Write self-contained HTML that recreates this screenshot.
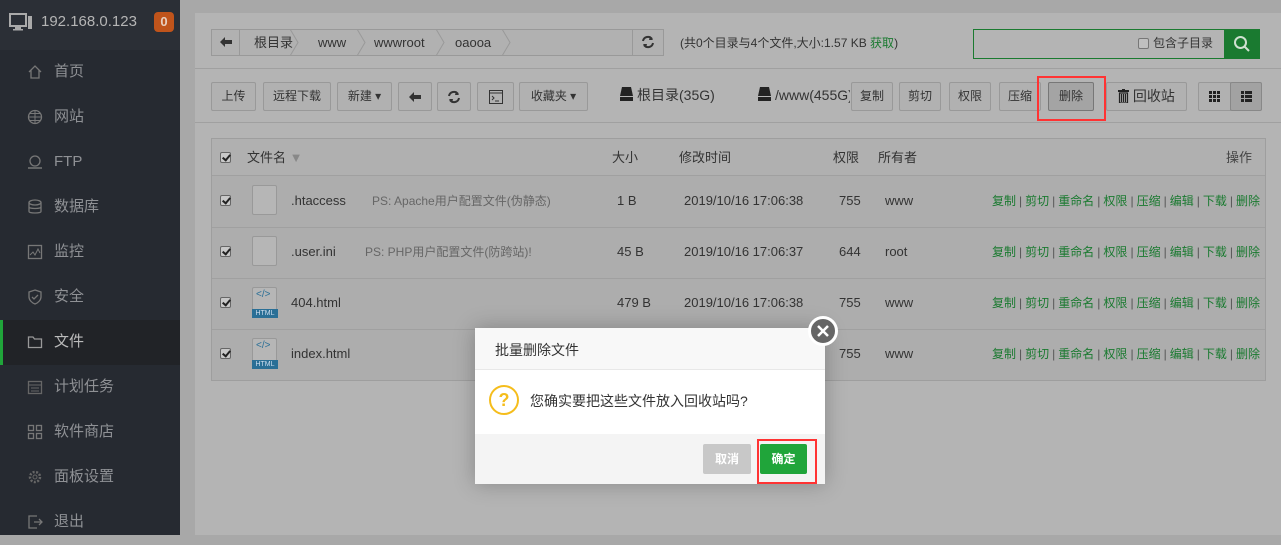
<!DOCTYPE html>
<html><head><meta charset="utf-8"><style>
*{box-sizing:border-box;margin:0;padding:0}
body{width:1281px;height:535px;overflow:hidden;background:#a8a8a8;font-family:"Liberation Sans","Noto Sans CJK SC",sans-serif;font-size:13px;line-height:18px;color:#333;position:relative}
.a{position:absolute}
#side{left:0;top:0;width:180px;height:535px;background:#262a31}
#side .hd{height:50px;background:#2b2f36}
.mi{position:absolute;left:0;width:180px;height:45px;color:#8f9195;font-size:15px}
.mi span{position:absolute;left:54px;top:12px;line-height:20px}
.mi svg{position:absolute;left:27px;top:14px}
#panel{left:195px;top:13px;width:1086px;height:522px;background:#b4b4b4}
.btn{position:absolute;height:29px;border:1px solid #999;border-radius:2px;background:#b1b1b1;color:#333;font-size:12px;text-align:center;line-height:27px}
.hl{position:absolute;height:1px;background:#a0a0a0}
.t{position:absolute;white-space:nowrap}
.cb{position:absolute;width:11px;height:11px;border:1px solid #666;border-radius:2px;background:#c8c8c8}
.cb:after{content:"";position:absolute;left:3px;top:0px;width:3px;height:6px;border:solid #222;border-width:0 2px 2px 0;transform:rotate(40deg)}
.ops{position:absolute;right:21px;font-size:12px;color:#1a7a30;white-space:nowrap}
.ops i{font-style:normal;color:#555;margin:0 3px}
.file{position:absolute;left:252px;width:25px;height:30px;border:1px solid #999;border-radius:2px;background:#b6b6b6}
</style></head><body>
<div id="side" class="a"><div class="hd"></div>
<svg class="a" style="left:9px;top:13px" width="24" height="18" viewBox="0 0 24 18"><rect x="1" y="1" width="16" height="12" fill="none" stroke="#aaa" stroke-width="2"/><rect x="6" y="14" width="6" height="2" fill="#aaa"/><rect x="4" y="16" width="10" height="1.5" fill="#aaa"/><rect x="19" y="3" width="4" height="13" fill="#aaa"/></svg>
<div class="t" style="left:41px;top:12px;color:#b5b5b5;font-size:15px;line-height:20px">192.168.0.123</div>
<div class="a" style="left:154px;top:12px;width:20px;height:20px;background:#c0541b;border-radius:4px;color:#e8d0c0;font-weight:bold;font-size:13px;text-align:center;line-height:20px">0</div>
<div class="mi" style="top:50px"><svg width="16" height="16"><path d="M2 8L8 2L14 8M4 6V14H12V6" fill="none" stroke="#777" stroke-width="1.3"/></svg><span>首页</span></div>
<div class="mi" style="top:95px"><svg width="16" height="16"><circle cx="8" cy="8" r="6.5" fill="none" stroke="#777" stroke-width="1.3"/><path d="M1.5 8H14.5M8 1.5V14.5M3 4.5H13M3 11.5H13" stroke="#777"/></svg><span>网站</span></div>
<div class="mi" style="top:140px"><svg width="16" height="16"><circle cx="8" cy="7" r="5" fill="none" stroke="#777" stroke-width="1.3"/><path d="M1 14H15" stroke="#777" stroke-width="1.5"/></svg><span>FTP</span></div>
<div class="mi" style="top:185px"><svg width="16" height="16"><ellipse cx="8" cy="3.5" rx="6" ry="2.5" fill="none" stroke="#777" stroke-width="1.3"/><path d="M2 3.5V12.5C2 14.5 14 14.5 14 12.5V3.5M2 8C2 10 14 10 14 8" fill="none" stroke="#777" stroke-width="1.3"/></svg><span>数据库</span></div>
<div class="mi" style="top:230px"><svg width="16" height="16"><rect x="1.5" y="1.5" width="13" height="13" fill="none" stroke="#777" stroke-width="1.3"/><path d="M3 11L6 8L8 11L11 5L13 9" fill="none" stroke="#777"/></svg><span>监控</span></div>
<div class="mi" style="top:275px"><svg width="16" height="16"><path d="M8 1L14 3V8C14 11 11 14 8 15C5 14 2 11 2 8V3Z" fill="none" stroke="#777" stroke-width="1.3"/><path d="M5 8L7 10L11 6" fill="none" stroke="#777" stroke-width="1.3"/></svg><span>安全</span></div>
<div class="mi" style="top:320px;background:#212327;color:#bbb"><div class="a" style="left:0;top:0;width:3px;height:45px;background:#20a53a"></div><svg width="16" height="16"><path d="M1.5 3H6L7.5 5H14.5V13.5H1.5Z" fill="none" stroke="#999" stroke-width="1.3"/></svg><span>文件</span></div>
<div class="mi" style="top:365px"><svg width="16" height="16"><rect x="1.5" y="2.5" width="13" height="12" fill="none" stroke="#666" stroke-width="1.3"/><path d="M1.5 6H14.5M4 9H12M4 12H12" stroke="#666"/></svg><span>计划任务</span></div>
<div class="mi" style="top:410px"><svg width="16" height="16"><rect x="1.5" y="1.5" width="5" height="5" fill="none" stroke="#777" stroke-width="1.3"/><rect x="9.5" y="1.5" width="5" height="5" fill="none" stroke="#777" stroke-width="1.3"/><rect x="1.5" y="9.5" width="5" height="5" fill="none" stroke="#777" stroke-width="1.3"/><rect x="9.5" y="9.5" width="5" height="5" fill="none" stroke="#777" stroke-width="1.3"/></svg><span>软件商店</span></div>
<div class="mi" style="top:455px"><svg width="16" height="16"><circle cx="8" cy="8" r="5" fill="none" stroke="#666" stroke-width="2.5" stroke-dasharray="2 1.5"/><circle cx="8" cy="8" r="2" fill="none" stroke="#666"/></svg><span>面板设置</span></div>
<div class="mi" style="top:500px"><svg width="16" height="16"><path d="M10 2H2V14H10M7 8H15M12 5L15 8L12 11" fill="none" stroke="#777" stroke-width="1.3"/></svg><span>退出</span></div>
</div>

<div id="panel" class="a"></div>
<div class="a" style="left:211px;top:29px;width:453px;height:27px;border:1px solid #999;background:#b1b1b1"></div>
<div class="a" style="left:211px;top:29px;width:29px;height:27px;border-right:1px solid #999"></div>
<svg class="a" style="left:219px;top:36px" width="14" height="12"><path d="M1 6L6 1V4H13V8H6V11Z" fill="#333"/></svg>
<svg class="a" style="left:240px;top:29px" width="280" height="27"><g fill="none" stroke="#999"><path d="M50 0L58 13.5L50 27M117 0L125 13.5L117 27M196 0L204 13.5L196 27M262 0L270 13.5L262 27"/></g></svg>
<div class="t" style="left:254px;top:34px">根目录</div>
<div class="t" style="left:318px;top:34px">www</div>
<div class="t" style="left:374px;top:34px">wwwroot</div>
<div class="t" style="left:455px;top:34px">oaooa</div>
<div class="a" style="left:632px;top:29px;width:32px;height:27px;border-left:1px solid #999"></div>
<svg class="a" style="left:641px;top:35px" width="14" height="14" viewBox="0 0 14 14"><path d="M2 6A5 5 0 0 1 11 4M12 8A5 5 0 0 1 3 10" fill="none" stroke="#333" stroke-width="2"/><path d="M9 1L12 5L8 5Z M5 13L2 9L6 9Z" fill="#333"/></svg>
<div class="t" style="left:680px;top:34px;font-size:12px">(共0个目录与4个文件,大小:1.57 KB <span style="color:#1a7a30">获取</span>)</div>
<div class="a" style="left:973px;top:29px;width:253px;height:30px;border:1px solid #1a7a30;background:#b4b4b4"></div>
<div class="a" style="left:1138px;top:38px;width:11px;height:11px;border:1px solid #777;border-radius:2px;background:#c0c0c0"></div>
<div class="t" style="left:1153px;top:34px;font-size:12px">包含子目录</div>
<div class="a" style="left:1224px;top:29px;width:36px;height:30px;background:#1a7a30"></div>
<svg class="a" style="left:1233px;top:35px" width="18" height="18"><circle cx="7.5" cy="7.5" r="5.5" fill="none" stroke="#cfe0d0" stroke-width="2"/><path d="M11.5 11.5L16 16" stroke="#cfe0d0" stroke-width="2"/></svg>
<div class="hl" style="left:195px;top:68px;width:1086px"></div>
<div class="btn" style="left:211px;top:82px;width:45px">上传</div>
<div class="btn" style="left:263px;top:82px;width:68px">远程下载</div>
<div class="btn" style="left:337px;top:82px;width:55px">新建 ▾</div>
<div class="btn" style="left:398px;top:82px;width:34px"><svg width="14" height="12" style="margin-top:8px"><path d="M1 6L6 1V4H13V8H6V11Z" fill="#333"/></svg></div>
<div class="btn" style="left:437px;top:82px;width:34px"><svg width="14" height="14" viewBox="0 0 14 14" style="margin-top:7px"><path d="M2 6A5 5 0 0 1 11 4M12 8A5 5 0 0 1 3 10" fill="none" stroke="#333" stroke-width="2"/><path d="M9 1L12 5L8 5Z M5 13L2 9L6 9Z" fill="#333"/></svg></div>
<div class="btn" style="left:477px;top:82px;width:37px"><svg width="14" height="14" style="margin-top:7px"><rect x="0.5" y="0.5" width="13" height="13" fill="none" stroke="#333"/><path d="M0 3H14" stroke="#333"/><path d="M3 6L5 8L3 10M6 11H10" fill="none" stroke="#333"/></svg></div>
<div class="btn" style="left:519px;top:82px;width:69px">收藏夹 ▾</div>
<svg class="a" style="left:619px;top:86px" width="15" height="16"><path d="M3 1H12L14 10H1Z" fill="#222"/><rect x="1" y="11" width="13" height="4" fill="#222"/></svg>
<div class="t" style="left:637px;top:86px;font-size:14px">根目录(35G)</div>
<svg class="a" style="left:757px;top:86px" width="15" height="16"><path d="M3 1H12L14 10H1Z" fill="#222"/><rect x="1" y="11" width="13" height="4" fill="#222"/></svg>
<div class="t" style="left:775px;top:86px;font-size:14px;width:75px;overflow:hidden">/www(455G)</div>
<div class="btn" style="left:851px;top:82px;width:42px">复制</div>
<div class="btn" style="left:899px;top:82px;width:42px">剪切</div>
<div class="btn" style="left:949px;top:82px;width:42px">权限</div>
<div class="btn" style="left:999px;top:82px;width:42px">压缩</div>
<div class="btn" style="left:1048px;top:82px;width:46px;background:#a4a4a4;border-color:#777">删除</div>
<div class="a" style="left:1037px;top:76px;width:69px;height:45px;border:2px solid #f33"></div>
<div class="btn" style="left:1106px;top:82px;width:81px;font-size:14px"><svg width="11" height="14" style="vertical-align:-2px"><rect x="0" y="1" width="11" height="2" fill="#222"/><rect x="4" y="0" width="3" height="1" fill="#222"/><path d="M1.5 4H9.5V14H1.5Z M3.5 5V13M5.5 5V13M7.5 5V13" fill="none" stroke="#222" stroke-width="1.2"/></svg> 回收站</div>
<div class="btn" style="left:1198px;top:82px;width:33px;border-radius:2px 0 0 2px"><svg width="11" height="11" style="margin-top:8px"><g fill="#222"><rect x="0" y="0" width="3" height="3"/><rect x="4" y="0" width="3" height="3"/><rect x="8" y="0" width="3" height="3"/><rect x="0" y="4" width="3" height="3"/><rect x="4" y="4" width="3" height="3"/><rect x="8" y="4" width="3" height="3"/><rect x="0" y="8" width="3" height="3"/><rect x="4" y="8" width="3" height="3"/><rect x="8" y="8" width="3" height="3"/></g></svg></div>
<div class="btn" style="left:1230px;top:82px;width:32px;background:#a2a2a2;border-color:#888"><svg width="11" height="11" style="margin-top:8px"><g fill="#222"><rect x="0" y="0" width="3" height="3"/><rect x="4" y="0" width="7" height="3"/><rect x="0" y="4" width="3" height="3"/><rect x="4" y="4" width="7" height="3"/><rect x="0" y="8" width="3" height="3"/><rect x="4" y="8" width="7" height="3"/></g></svg></div>
<div class="hl" style="left:195px;top:122px;width:1086px"></div>
<div class="a" style="left:211px;top:138px;width:1055px;height:243px;border:1px solid #9e9e9e;background:#adadad"></div>
<div class="a" style="left:212px;top:139px;width:1053px;height:37px;background:#b0b0b0;border-bottom:1px solid #a0a0a0"></div>
<div class="cb" style="left:220px;top:152px"></div>
<div class="t" style="left:247px;top:149px">文件名 <span style="color:#888">▼</span></div>
<div class="t" style="left:612px;top:149px">大小</div>
<div class="t" style="left:679px;top:149px">修改时间</div>
<div class="t" style="left:833px;top:149px">权限</div>
<div class="t" style="left:878px;top:149px">所有者</div>
<div class="t" style="left:1226px;top:149px;color:#444">操作</div>
<div class="hl" style="left:212px;top:227px;width:1053px"></div>
<div class="hl" style="left:212px;top:278px;width:1053px"></div>
<div class="hl" style="left:212px;top:329px;width:1053px"></div>

<div class="cb" style="left:220px;top:195px"></div><div class="file" style="top:185px"></div>
<div class="t" style="left:291px;top:192px">.htaccess</div><div class="t" style="left:372px;top:192px;color:#666;font-size:12px">PS: Apache用户配置文件(伪静态)</div>
<div class="t" style="left:617px;top:192px">1 B</div><div class="t" style="left:684px;top:192px">2019/10/16 17:06:38</div><div class="t" style="left:839px;top:192px">755</div><div class="t" style="left:885px;top:192px">www</div>
<div class="ops" style="top:192px">复制<i>|</i>剪切<i>|</i>重命名<i>|</i>权限<i>|</i>压缩<i>|</i>编辑<i>|</i>下载<i>|</i>删除</div>

<div class="cb" style="left:220px;top:246px"></div><div class="file" style="top:236px"></div>
<div class="t" style="left:291px;top:243px">.user.ini</div><div class="t" style="left:365px;top:243px;color:#666;font-size:12px">PS: PHP用户配置文件(防跨站)!</div>
<div class="t" style="left:617px;top:243px">45 B</div><div class="t" style="left:684px;top:243px">2019/10/16 17:06:37</div><div class="t" style="left:839px;top:243px">644</div><div class="t" style="left:885px;top:243px">root</div>
<div class="ops" style="top:243px">复制<i>|</i>剪切<i>|</i>重命名<i>|</i>权限<i>|</i>压缩<i>|</i>编辑<i>|</i>下载<i>|</i>删除</div>

<div class="cb" style="left:220px;top:297px"></div><div class="file" style="top:287px"></div><div class="a" style="left:252px;top:309px;width:26px;height:9px;background:#2a6f96;color:#cde;font-size:7px;text-align:center;line-height:9px">HTML</div><div class="t" style="left:256px;top:289px;color:#2a6f96;font-size:10px;line-height:12px">&lt;/&gt;</div>
<div class="t" style="left:291px;top:294px">404.html</div>
<div class="t" style="left:617px;top:294px">479 B</div><div class="t" style="left:684px;top:294px">2019/10/16 17:06:38</div><div class="t" style="left:839px;top:294px">755</div><div class="t" style="left:885px;top:294px">www</div>
<div class="ops" style="top:294px">复制<i>|</i>剪切<i>|</i>重命名<i>|</i>权限<i>|</i>压缩<i>|</i>编辑<i>|</i>下载<i>|</i>删除</div>

<div class="cb" style="left:220px;top:348px"></div><div class="file" style="top:338px"></div><div class="a" style="left:252px;top:360px;width:26px;height:9px;background:#2a6f96;color:#cde;font-size:7px;text-align:center;line-height:9px">HTML</div><div class="t" style="left:256px;top:340px;color:#2a6f96;font-size:10px;line-height:12px">&lt;/&gt;</div>
<div class="t" style="left:291px;top:345px">index.html</div>
<div class="t" style="left:839px;top:345px">755</div><div class="t" style="left:885px;top:345px">www</div>
<div class="ops" style="top:345px">复制<i>|</i>剪切<i>|</i>重命名<i>|</i>权限<i>|</i>压缩<i>|</i>编辑<i>|</i>下载<i>|</i>删除</div>

<div class="a" style="left:475px;top:328px;width:350px;height:156px;background:#fff;box-shadow:0 0 20px rgba(0,0,0,.25)"></div>
<div class="a" style="left:475px;top:328px;width:350px;height:42px;background:#f8f8f8;border-bottom:1px solid #e8e8e8"></div>
<div class="t" style="left:495px;top:340px;font-size:14px;line-height:20px;color:#333">批量删除文件</div>
<div class="a" style="left:489px;top:385px;width:30px;height:30px;border:2px solid #f5bd1c;border-radius:50%;color:#f5bd1c;font-weight:bold;font-size:18px;text-align:center;line-height:26px">?</div>
<div class="t" style="left:530px;top:391px;font-size:14px;line-height:20px;color:#333">您确实要把这些文件放入回收站吗?</div>
<div class="a" style="left:475px;top:434px;width:350px;height:50px;background:#f4f4f4"></div>
<div class="a" style="left:703px;top:444px;width:48px;height:30px;background:#c8c8c8;border-radius:2px;color:#fff;font-size:12px;font-weight:bold;text-align:center;line-height:30px">取消</div>
<div class="a" style="left:760px;top:444px;width:47px;height:30px;background:#20a53a;border-radius:2px;color:#fff;font-size:12px;font-weight:bold;text-align:center;line-height:30px">确定</div>
<div class="a" style="left:757px;top:439px;width:60px;height:45px;border:2px solid #f33"></div>
<div class="a" style="left:808px;top:316px;width:30px;height:30px;background:#666;border:3px solid #fff;border-radius:50%"></div>
<svg class="a" style="left:815px;top:323px" width="16" height="16"><path d="M3 3L13 13M13 3L3 13" stroke="#fff" stroke-width="2.5"/></svg>
</body></html>
